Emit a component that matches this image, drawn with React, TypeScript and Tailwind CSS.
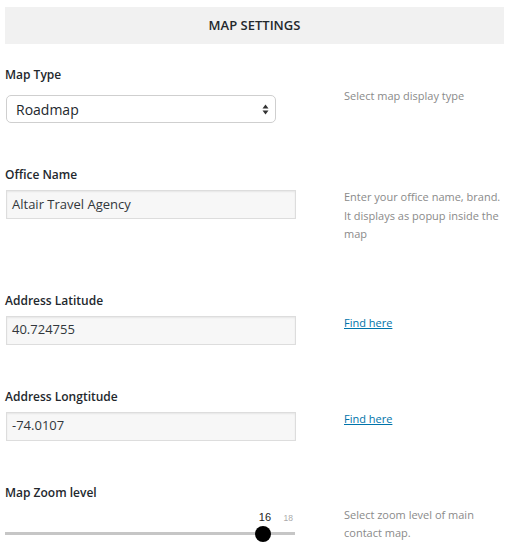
import React from 'react';

const font = { fontFamily: '"Open Sans", "Noto Sans", sans-serif' };

interface FieldRowProps {
  label: string;
  children: React.ReactNode;
  description: React.ReactNode;
}

const FieldRow: React.FC<FieldRowProps> = ({ label, children, description }) => {
  return (
    <div className="grid grid-cols-[290px_1fr] gap-x-[49px] pb-[43px] last:pb-0">
      <div>
        <div className="text-[12px] leading-[18px] font-semibold text-[#23282d]">{label}</div>
        {children}
      </div>
      <div className="pt-[22px] mb-[5px] text-[11px] leading-[18.5px] text-[#8a8a8a]">{description}</div>
    </div>
  );
};

const TextInput: React.FC<{ value: string; className?: string }> = ({ value, className }) => (
  <div
    className={`ml-px w-[290px] h-[29px] flex items-center px-[5px] bg-[#f7f7f7] border border-[#dddddd] shadow-[inset_0_1px_2px_rgba(0,0,0,0.07)] text-[13px] text-[#32373c] ${className ?? ''}`}
  >
    {value}
  </div>
);

const SelectBox: React.FC<{ value: string }> = ({ value }) => (
  <div className="ml-px mt-[11px] w-[270px] h-[28px] flex items-center justify-between pl-[9px] pr-[6px] bg-white border border-[#cfcfcf] rounded-[5px] text-[14px] text-[#23282d]">
    <span>{value}</span>
    <svg width="7" height="11" viewBox="0 0 7 11">
      <path d="M3.5 0.5 L6.5 4.5 L0.5 4.5 Z" fill="#333" />
      <path d="M3.5 10.5 L6.5 6.5 L0.5 6.5 Z" fill="#333" />
    </svg>
  </div>
);

const ZoomSlider: React.FC<{ value: number; max: number }> = ({ value, max }) => {
  const pct = (value / max) * 100;
  return (
    <div className="relative w-[290px] h-[34px] mt-[3px]">
      <div className="absolute left-0 right-0 top-[27px] h-[3px] bg-[#c6c6c6]" />
      <div
        className="absolute top-[21px] w-[16px] h-[16px] -ml-[8px] rounded-full bg-black"
        style={{ left: `${pct}%` }}
      />
      <span
        className="absolute top-[6px] -ml-[4px] text-[11px] leading-[13px] text-[#222]"
        style={{ left: `${pct}%`, fontFamily: '"Liberation Sans", Arial, sans-serif' }}
      >
        {value}
      </span>
      <span
        className="absolute top-[8px] right-[2px] text-[8.5px] leading-[10px] text-[#aaaaaa]"
        style={{ fontFamily: '"Liberation Sans", Arial, sans-serif' }}
      >
        {max}
      </span>
    </div>
  );
};

export default function App() {
  return (
    <div className="w-[509px] h-[560px] overflow-hidden bg-white px-[5px] pt-[7px]" style={font}>
      <div className="h-[37px] bg-[#f1f1f1] flex items-center justify-center text-[13px] font-semibold text-[#23282d]">
        MAP SETTINGS
      </div>
      <div className="pt-[22px]">
        <FieldRow label="Map Type" description={<span className="block -mt-[1px]">Select map display type</span>}>
          <SelectBox value="Roadmap" />
        </FieldRow>
        <FieldRow
          label="Office Name"
          description="Enter your office name, brand. It displays as popup inside the map"
        >
          <TextInput value="Altair Travel Agency" className="mt-[6px]" />
        </FieldRow>
        <FieldRow
          label="Address Latitude"
          description={<a href="#" className="text-[#0073aa] underline">Find here</a>}
        >
          <TextInput value="40.724755" className="mt-[6px]" />
        </FieldRow>
        <FieldRow
          label="Address Longtitude"
          description={<a href="#" className="text-[#0073aa] underline">Find here</a>}
        >
          <TextInput value="-74.0107" className="mt-[6px]" />
        </FieldRow>
        <FieldRow label="Map Zoom level" description="Select zoom level of main contact map.">
          <ZoomSlider value={16} max={18} />
        </FieldRow>
      </div>
    </div>
  );
}
